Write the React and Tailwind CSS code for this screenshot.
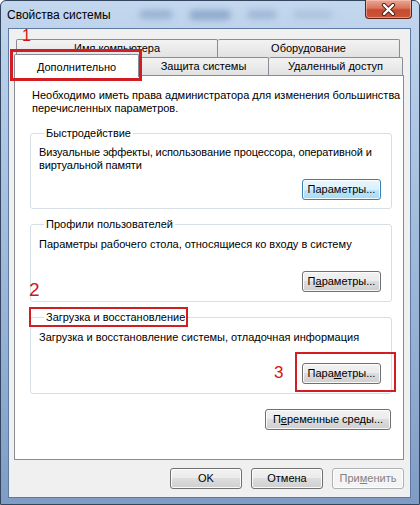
import React from "react";

function Btn({ children, w = "w-[79px]", kind = "normal", className = "" }) {
  const base =
    "h-[21px] rounded-[3px] border flex items-center justify-center text-[11px] leading-none shadow-[inset_0_0_0_1px_rgba(255,255,255,0.85)] ";
  const styles = {
    normal:
      "border-[#707070] text-black bg-[linear-gradient(#f2f2f2_0%,#ebebeb_50%,#dddddd_50%,#cfcfcf_100%)]",
    def:
      "border-[#3c7fb1] text-black bg-[linear-gradient(#eaf6fd_0%,#d9f0fc_50%,#bee6fd_50%,#a7d9f5_100%)]",
    disabled: "border-[#adb2b5] text-[#838383] bg-[#f4f4f4]",
  };
  return <div className={base + styles[kind] + " " + w + " " + className}>{children}</div>;
}

function Group({ title, children, className = "" }) {
  return (
    <fieldset className={"min-w-0 border border-[#d5dfe5] rounded-[3px] pl-[8px] pr-[10px] mr-[7px] " + className}>
      <legend className="ml-[5px] px-[2px] leading-[13px]">{title}</legend>
      {children}
    </fieldset>
  );
}

export default function App() {
  return (
    <div className="relative w-[420px] h-[505px] overflow-hidden font-['Liberation_Sans',Arial,sans-serif] text-[11px] text-black">
      <div className="w-[420px] h-[505px] flex flex-col border border-[#34465f] rounded-t-[6px] bg-[linear-gradient(180deg,#c3d7ee_0%,#b2cae6_20%,#93afd3_70%,#7f9cc5_100%)] px-[7px] pr-[8px] pb-[6px]">
        {/* title bar */}
        <div className="h-[27px] flex items-center shrink-0">
          <span className="text-[12px] leading-none text-black ml-[-1px]">Свойства системы</span>
          <div className="flex items-center ml-[28px] gap-[16px] opacity-60">
            <div className="w-[34px] h-[9px] rounded-full bg-[#7f9cc0] blur-[3px]" />
            <div className="w-[42px] h-[10px] rounded-full bg-[#6f8db5] blur-[3px]" />
            <div className="w-[30px] h-[9px] rounded-full bg-[#8aa5c7] blur-[3px]" />
            <div className="w-[40px] h-[9px] rounded-full bg-[#a2b9d6] blur-[3px]" />
          </div>
        </div>

        {/* client area */}
        <div className="flex-1 flex flex-col bg-[#f0f0f0] border border-[#5f7aa0] pt-[10px] pl-[5px] pr-[6px]">
          {/* tabs */}
          <div className="flex flex-col w-[390px]">
            <div className="flex ml-[2px] h-[18px]">
              <div className="w-[202px] h-[18px] border border-b-0 border-[#898c95] rounded-t-[2px] bg-[linear-gradient(#f3f3f3,#e2e2e2)] flex items-center justify-center">
                Имя компьютера
              </div>
              <div className="w-[182px] h-[18px] border border-b-0 border-l-0 border-[#898c95] rounded-t-[2px] bg-[linear-gradient(#f3f3f3,#e2e2e2)] flex items-center justify-center">
                Оборудование
              </div>
            </div>
            <div className="flex h-[18px]">
              <div className="relative z-10 w-[125px] h-[23px] -mt-[3px] border border-b-0 border-[#898c95] rounded-t-[2px] bg-white flex items-start pt-[4px] justify-center">
                Дополнительно
              </div>
              <div className="w-[130px] h-[18px] border border-b-0 border-l-0 border-[#898c95] rounded-t-[2px] bg-[linear-gradient(#f3f3f3,#e2e2e2)] flex items-center justify-center">
                Защита системы
              </div>
              <div className="w-[134px] h-[18px] border border-b-0 border-l-0 border-[#898c95] rounded-t-[2px] bg-[linear-gradient(#f3f3f3,#e2e2e2)] flex items-center justify-center">
                Удаленный доступ
              </div>
            </div>
          </div>

          {/* panel */}
          <div className="w-[390px] h-[385px] border border-[#898c95] bg-white flex flex-col pt-[13px] pl-[15px] pr-[4px]">
            <p className="leading-[13px] pl-[2px] whitespace-nowrap">
              Необходимо иметь права администратора для изменения большинства
              <br />
              перечисленных параметров.
            </p>

            <Group title="Быстродействие" className="mt-[12px] pb-[8px]">
              <p className="leading-[13px] pt-[6px] min-h-[32px] tracking-[-0.12px] whitespace-nowrap">
                Визуальные эффекты, использование процессора, оперативной и
                <br />
                виртуальной памяти
              </p>
              <div className="flex justify-end mt-[7px]">
                <Btn kind="def">Параметры...</Btn>
              </div>
            </Group>

            <Group title="Профили пользователей" className="mt-[9px] pb-[9px]">
              <p className="leading-[13px] pt-[7px] min-h-[33px]">
                Параметры рабочего стола, относящиеся ко входу в систему
              </p>
              <div className="flex justify-end mt-[7px]">
                <Btn>
                  <span>
                    П<u>а</u>раметры...
                  </span>
                </Btn>
              </div>
            </Group>

            <Group title="Загрузка и восстановление" className="mt-[9px] pb-[9px]">
              <p className="leading-[13px] pt-[7px] min-h-[33px]">
                Загрузка и восстановление системы, отладочная информация
              </p>
              <div className="flex justify-end mt-[6px]">
                <Btn>
                  <span>
                    Пара<u>м</u>етры...
                  </span>
                </Btn>
              </div>
            </Group>

            <div className="flex justify-end mt-[15px] mr-[8px]">
              <Btn w="w-[126px]">
                <span>
                  П<u>е</u>ременные среды...
                </span>
              </Btn>
            </div>
          </div>

          {/* bottom buttons */}
          <div className="flex justify-end gap-[9px] mt-[8px] w-[390px]">
            <Btn w="w-[72px]">OK</Btn>
            <Btn w="w-[72px]">Отмена</Btn>
            <Btn w="w-[72px]" kind="disabled">
              <span>
                При<u>м</u>енить
              </span>
            </Btn>
          </div>
        </div>
      </div>

      {/* close button */}
      <div className="absolute top-0 right-[8px] w-[47px] h-[19px] rounded-b-[4px] border border-t-0 border-[#5a2518] bg-[linear-gradient(#eaa896_0%,#d9745c_45%,#c74a30_55%,#c8553a_100%)] flex items-center justify-center shadow-[inset_0_0_0_1px_rgba(255,210,200,0.5)]">
        <svg width="15" height="13" viewBox="0 0 15 13">
          <path d="M3 2 L12 11 M12 2 L3 11" stroke="#4a2018" strokeWidth="4.2" strokeLinecap="round" />
          <path d="M3 2 L12 11 M12 2 L3 11" stroke="#ffffff" strokeWidth="2.4" strokeLinecap="round" />
        </svg>
      </div>

      {/* annotations */}
      <div className="absolute left-[22px] top-[28px] text-[16px] leading-none text-[#d0141a]">1</div>
      <div className="absolute left-[10px] top-[49px] w-[132px] h-[32px] border-[3px] border-[#d11d24]" />
      <div className="absolute left-[29px] top-[280px] text-[19px] leading-none text-[#d0141a]">2</div>
      <div className="absolute left-[29px] top-[307px] w-[159px] h-[20px] border-[2px] border-[#d11d24]" />
      <div className="absolute left-[274px] top-[364px] text-[17px] leading-none text-[#d0141a]">3</div>
      <div className="absolute left-[295px] top-[352px] w-[101px] h-[40px] border-[2px] border-[#d11d24]" />
    </div>
  );
}
